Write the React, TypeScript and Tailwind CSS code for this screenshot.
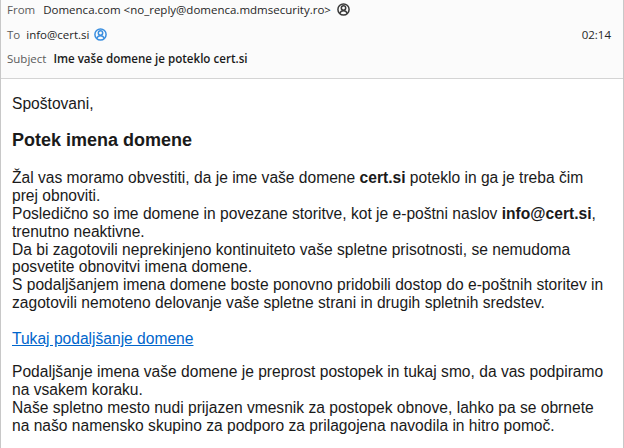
const bodyFont = "font-['Liberation_Sans',Arial,sans-serif]";

function ContactIcon({ color }: { color: string }) {
  return (
    <svg width="13" height="13" viewBox="0 0 13 13" fill="none" stroke={color} strokeWidth="1.5">
      <circle cx="6.5" cy="6.5" r="5.6" />
      <circle cx="6.5" cy="5" r="2.2" />
      <path d="M2.800 10.600c.6-2 2-2.900 3.700-2.900s3.100.9 3.700 2.900" />
    </svg>
  );
}

export default function App() {
  return (
    <div className="w-[624px] h-[448px] overflow-hidden bg-white flex flex-col border-x border-x-[#c8c8c8]">
      {/* Message header */}
      <header className="h-[79px] shrink-0 bg-[#fbfbfb] border-b border-b-[#d4d4d4] pl-[6px] pr-[12px] text-[11.5px] text-[#262626] font-['Open_Sans',sans-serif] flex flex-col">
        <div className="h-[19px] flex items-center gap-[8px]">
          <span className="text-[#5a5a5a]">From</span>
          <span className="flex items-center gap-[6px]">
            Domenca.com &lt;no_reply@domenca.mdmsecurity.ro&gt;
            <ContactIcon color="#3a3a3a" />
          </span>
        </div>
        <div className="h-[31px] flex items-center justify-between">
          <span className="flex items-center gap-[6px]">
            <span className="text-[#5a5a5a]">To</span>
            <span className="flex items-center gap-[4px]">
              info@cert.si
              <ContactIcon color="#3b8fe0" />
            </span>
          </span>
          <span>02:14</span>
        </div>
        <div className="h-[17px] flex items-center gap-[7px]">
          <span className="text-[#5a5a5a]">Subject</span>
          <span className="font-semibold text-[11.6px] text-[#1a1a1a]">Ime vaše domene je poteklo cert.si</span>
        </div>
      </header>

      {/* Message body */}
      <main className={`${bodyFont} flex-1 pl-[11px] pr-[12px] pt-[16px] text-[15.6px] leading-[17.9px] text-[#1a1a1a]`}>
        <p>Spoštovani,</p>
        <h1 className="mt-[17px] text-[18px] leading-[21px] font-bold">Potek imena domene</h1>
        <p className="mt-[18px]">
          Žal vas moramo obvestiti, da je ime vaše domene <b>cert.si</b> poteklo in ga je treba čim prej obnoviti.
          <br />
          Posledično so ime domene in povezane storitve, kot je e-poštni naslov <b>info@cert.si</b>, trenutno neaktivne.
          <br />
          Da bi zagotovili neprekinjeno kontinuiteto vaše spletne prisotnosti, se nemudoma posvetite obnovitvi imena domene.
          <br />
          S podaljšanjem imena domene boste ponovno pridobili dostop do e-poštnih storitev in zagotovili nemoteno delovanje vaše spletne strani in drugih spletnih sredstev.
        </p>
        <p className="mt-[18px]">
          <a href="#" className="text-[#0066cc] underline">Tukaj podaljšanje domene</a>
        </p>
        <p className="mt-[15px]">
          Podaljšanje imena vaše domene je preprost postopek in tukaj smo, da vas podpiramo na vsakem koraku.
          <br />
          Naše spletno mesto nudi prijazen vmesnik za postopek obnove, lahko pa se obrnete na našo namensko skupino za podporo za prilagojena navodila in hitro pomoč.
        </p>
      </main>
    </div>
  );
}
